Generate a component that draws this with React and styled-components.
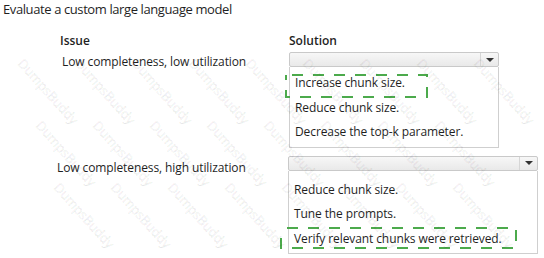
import React from 'react';
import styled, { createGlobalStyle } from 'styled-components';

const GlobalStyle = createGlobalStyle`
  html, body {
    margin: 0;
    padding: 0;
    background: #fff;
  }
  body {
    font-family: 'Open Sans', 'Noto Sans', sans-serif;
    color: #1f1f1f;
  }
`;

const Page = styled.div`
  position: relative;
  width: 544px;
  height: 258px;
  overflow: hidden;
  padding: 1px 0 0 3px;
  box-sizing: border-box;
`;

const Title = styled.h1`
  margin: 0;
  font-size: 13px;
  font-weight: 400;
  line-height: 16px;
  letter-spacing: -0.4px;
`;

const Table = styled.div`
  display: grid;
  grid-template-columns: 229px auto;
  margin: 16px 0 0 54px;
`;

const Head = styled.div`
  font-size: 12px;
  font-weight: 600;
  line-height: 16px;
  padding-left: ${(p) => p.$indent || 0}px;
  height: 17px;
`;

const IssueText = styled.div`
  font-size: 12px;
  line-height: 16px;
  letter-spacing: -0.1px;
  padding: ${(p) => p.$top}px 0 0 ${(p) => p.$indent}px;
`;

const SolutionCell = styled.div`
  display: flex;
  flex-direction: column;
  width: ${(p) => p.$width}px;
  margin: ${(p) => p.$top}px 0 0 ${(p) => p.$indent}px;
`;

const Select = styled.div`
  display: flex;
  height: 13px;
  border: 1px solid #c9c9c9;
  border-radius: 2px;
  background: linear-gradient(#f7f7f7, #e9e9e9);
`;

const SelectValue = styled.div`
  flex: 1;
`;

const ArrowCell = styled.div`
  display: flex;
  align-items: center;
  justify-content: center;
  width: 17px;
  border-left: 1px solid #d6d6d6;
`;

const Arrow = styled.span`
  width: 0;
  height: 0;
  border-left: 4px solid transparent;
  border-right: 4px solid transparent;
  border-top: 4px solid #333;
`;

const List = styled.ul`
  list-style: none;
  margin: 0;
  padding: ${(p) => p.$top}px 0 ${(p) => p.$bottom}px 0;
  border: 1px solid #cfcfcf;
  border-top: none;
  background: #fff;
`;

const Option = styled.li`
  position: relative;
  height: 24.5px;
  line-height: 24.5px;
  padding-left: 5px;
  font-size: 12px;
  letter-spacing: -0.1px;
  white-space: nowrap;
`;

const Mark = styled.svg`
  position: absolute;
  left: ${(p) => p.$left}px;
  top: ${(p) => p.$top}px;
  overflow: visible;
  pointer-events: none;
`;

const Watermarks = styled.div`
  position: absolute;
  inset: 0;
  pointer-events: none;
`;

const Stamp = styled.span`
  position: absolute;
  font-family: 'Open Sans', sans-serif;
  font-size: 13px;
  line-height: 14px;
  color: rgba(0, 0, 0, 0.03);
  -webkit-text-stroke: 0.5px rgba(0, 0, 0, 0.1);
  transform: rotate(48deg);
  transform-origin: 0 0;
  white-space: nowrap;
`;

const Highlight = ({ w, h, left, top }) => (
  <Mark width={w} height={h} $left={left} $top={top}>
    <rect
      x="1"
      y="1"
      width={w - 2}
      height={h - 2}
      fill="none"
      stroke="#4caa4c"
      strokeWidth="2"
      strokeDasharray="11 10"
      strokeDashoffset="-6"
    />
  </Mark>
);

const Dropdown = ({ width, indent, top, listTop, listBottom, options, mark }) => (
  <SolutionCell $width={width} $indent={indent} $top={top}>
    <Select>
      <SelectValue />
      <ArrowCell>
        <Arrow />
      </ArrowCell>
    </Select>
    <List $top={listTop} $bottom={listBottom}>
      {options.map((o, i) => (
        <Option key={o}>
          {mark && mark.index === i && <Highlight {...mark} />}
          {o}
        </Option>
      ))}
    </List>
  </SolutionCell>
);

// watermark grid, only the stamps that stay fully inside the frame
const stamps = [];
for (let r = -3; r < 6; r++) {
  for (let c = -3; c < 12; c++) {
    const x = c * 57 + r * 18 + 8;
    const y = r * 62 - 6;
    if (x - 12 >= 0 && x + 62 <= 544 && y >= 0 && y + 70 <= 258) {
      stamps.push({ x, y });
    }
  }
}

const App = () => (
  <>
    <GlobalStyle />
    <Page>
      <Title>Evaluate a custom large language model</Title>
      <Table>
        <Head $indent={3}>Issue</Head>
        <Head $indent={3}>Solution</Head>

        <IssueText $top={4} $indent={5}>Low completeness, low utilization</IssueText>
        <Dropdown
          width={210}
          indent={3}
          top={2}
          listTop={4}
          listBottom={2}
          options={['Increase chunk size.', 'Reduce chunk size.', 'Decrease the top-k parameter.']}
          mark={{ index: 0, w: 143, h: 24, left: -5, top: 3 }}
        />

        <IssueText $top={12} $indent={0}>Low completeness, high utilization</IssueText>
        <Dropdown
          width={250}
          indent={2}
          top={8}
          listTop={7}
          listBottom={2}
          options={['Reduce chunk size.', 'Tune the prompts.', 'Verify relevant chunks were retrieved.']}
          mark={{ index: 2, w: 237, h: 22, left: -9, top: 0 }}
        />
      </Table>
      <Watermarks>
        {stamps.map((s, i) => (
          <Stamp key={i} style={{ left: s.x, top: s.y }}>
            DumpsBuddy
          </Stamp>
        ))}
      </Watermarks>
    </Page>
  </>
);

export default App;
